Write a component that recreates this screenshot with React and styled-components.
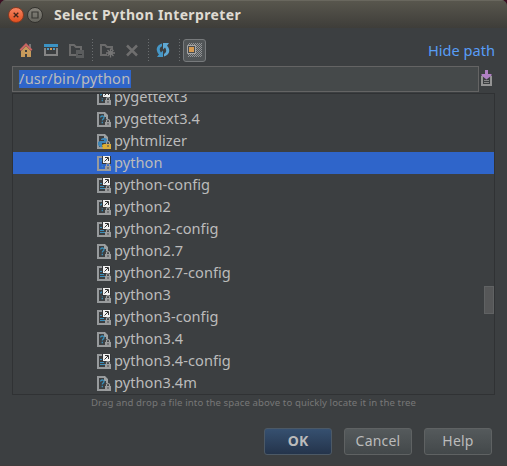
import React from 'react';
import styled, { createGlobalStyle } from 'styled-components';

const Global = createGlobalStyle`
  * { box-sizing: border-box; }
  body { margin: 0; background: #3c0f22; overflow: hidden; }
  svg { display: block; flex: none; }
`;
const Dialog = styled.div`
  width: 507px; height: 466px; background: #3c3f41; color: #bbb;
  font: 14.6px "Noto Sans", sans-serif; display: flex; flex-direction: column;
  border-radius: 6px 6px 0 0; overflow: hidden; border-bottom: 1px solid #403c3c;
`;
const TitleBar = styled.header`
  height: 28px; flex: none; display: flex; align-items: center; padding: 1px 0 0 8px;
  background: linear-gradient(#59574e, #3e3d39); box-shadow: inset 0 1px #69675e;
`;
const WindowButton = styled.button`
  width: 16px; height: 16px; padding: 0; margin-right: 3px; border-radius: 50%;
  border: 1px solid ${p => (p.$close ? '#8a3a20' : '#33322e')};
  background: ${p => (p.$close ? 'linear-gradient(#f58462, #e2501f)' : 'linear-gradient(#85837b, #65645d)')};
  display: grid; place-items: center;
`;
const Title = styled.h1`
  margin: -1px 0 0 8px; font: bold 14px "Noto Sans", sans-serif; color: #dfdbd2;
  letter-spacing: 0.36px; white-space: nowrap;
`;
const Toolbar = styled.div`
  height: 38px; flex: none; display: flex; align-items: center; padding: 7px 12px 0 14px;
`;
const Tool = styled.button`
  width: ${p => p.$w || 25}px; height: 23px; padding: 0; display: grid; place-items: center;
  border: 1px solid ${p => (p.$on ? '#777a7c' : 'transparent')}; border-radius: 3px;
  background: ${p => (p.$on ? '#515557' : 'none')};
`;
const Separator = styled.i`
  width: 1px; height: 23px; margin: 0 ${p => p.$r ?? 2}px 0 3px;
  background: repeating-linear-gradient(#6b6e70 0 1px, transparent 1px 3px);
`;
const PathLink = styled.a`
  margin: -2px 0 0 auto; color: #589df6; font-size: 14.6px; line-height: 22px;
`;
const PathRow = styled.div`
  height: 27px; flex: none; display: flex; padding-left: 12px; gap: 1px;
`;
const PathField = styled.div`
  width: 467px; height: 26px; border: 1px solid #646464; background: #45494a;
  display: flex; align-items: center; padding-left: 6px;
`;
const Selection = styled.span`
  height: 18px; line-height: 16px; width: 112px; background: #2f65ca; white-space: nowrap;
  letter-spacing: 0.2px;
`;
const HistoryButton = styled.button`
  padding: 4px 0 0 1px; background: none; border: 0; display: flex; align-items: flex-start;
`;
const Tree = styled.div`
  margin: 0 12px; height: 302px; flex: none; border: 1px solid #303234; display: flex; overflow: hidden;
  position: relative;
`;
const Rows = styled.div`
  flex: 1; margin-top: -8px;
`;
const Row = styled.div`
  height: 22px; display: flex; align-items: flex-start; gap: 3px; padding-left: 84px;
  background: ${p => (p.$selected ? '#2f65ca' : 'transparent')};
  svg { margin-top: 4px; }
`;
const RowText = styled.span`
  line-height: 20px; white-space: nowrap; letter-spacing: 0.04px;
`;
const Thumb = styled.div`
  position: absolute; right: 0; top: 192px; width: 10px; height: 28px;
  background: #565758; border: 1px solid #606263;
`;
const Hint = styled.p`
  margin: 0; height: 33px; flex: none; text-align: center; color: #777; font-size: 9.6px; line-height: 16px;
  white-space: nowrap; letter-spacing: 0.1px;
`;
const Actions = styled.footer`
  display: flex; justify-content: flex-end; gap: 12px; padding-right: 15px;
`;
const Action = styled.button`
  width: 68px; height: 27px; padding: 0 0 2px; border-radius: 3px; color: #bbb;
  border: 1px solid ${p => (p.$primary ? '#4c5966' : '#5f6263')};
  background: ${p => (p.$primary ? 'linear-gradient(#365070, #24344b)' : 'linear-gradient(#555a5c, #43484a)')};
  font: ${p => (p.$primary ? 'bold' : 'normal')} 14px "Noto Sans", sans-serif;
  letter-spacing: ${p => (p.$primary ? 0 : 0.2)}px;
`;

const HomeIcon = () => (
  <svg width="15" height="15" viewBox="0 0 15 15">
    <path d="M2 8l5-5 5 5v6H8v-3H6v3H2z" fill="#c69a5b" />
    <path d="M10 1h2v5h-2z" fill="#777" />
    <path d="M1.300 7.300L7 1.500l5.700 5.800" fill="none" stroke="#c96562" strokeWidth="2" />
    <path d="M6 7h2v2H6zM6 11h2v3H6z" fill="#3c3f41" />
  </svg>
);
const ProjectIcon = () => (
  <svg width="15" height="13" viewBox="0 0 15 13">
    <path d="M0 0h14v3H0z" fill="#3b93c4" />
    <path d="M1 4v7h12V4" fill="none" stroke="#858585" strokeWidth="2" />
    <path d="M3 4h2v2H3zM9 4h2v2H9z" fill="#4a9bc9" />
    <path d="M6 4h2v2H6z" fill="#d69a52" />
  </svg>
);
const FolderIcon = ({ star }) => (
  <svg width="15" height="15" viewBox="0 0 15 15">
    <path d="M1 12V2h4l2 2h5v3M0 12h7" fill="none" stroke="#6b6b6b" strokeWidth="2" />
    {star ? (
      <g stroke="#757575" strokeWidth="1.300">
        <path d="M10.500 5.500v9M6 10h9M7.500 7l6 6M13.500 7l-6 6" />
        <circle cx="10.500" cy="10" r="2.300" fill="#757575" stroke="none" />
      </g>
    ) : (
      <g><path d="M7 7h8v8H7z" fill="#5b5d5e" /><path d="M9 11.500h4" stroke="#333638" /></g>
    )}
  </svg>
);
const DeleteIcon = () => (
  <svg width="13" height="13" viewBox="0 0 13 13">
    <path d="M1 1.500l10 10M11 1.500l-10 10" stroke="#6e6e6e" strokeWidth="2.500" />
  </svg>
);
const RefreshIcon = () => (
  <svg width="15" height="15" viewBox="0 0 15 15">
    <path d="M6 .5C2 1.500 0 5 1 8c.4 1.500 1 2.500 2 3.300L1 14h6V7.500L5 9.500C3 7 3.500 4 6 3.200z" fill="#4597c7" />
    <path d="M8 13.500c4-1 6-4.500 5-7.500-.4-1.500-1-2.500-2-3.300L13 0H7v6.500l2-2c2 2.500 1.500 5.500-1 6.300z" fill="#5fa9d4" />
  </svg>
);
const HiddenIcon = () => (
  <svg width="15" height="15" viewBox="0 0 15 15">
    <defs>
      <pattern id="dither" width="2" height="2" patternUnits="userSpaceOnUse">
        <path d="M0 0h1v1H0zM1 1h1v1H1z" fill="#929496" />
      </pattern>
    </defs>
    <path d="M1 0h14v14H1z" fill="url(#dither)" />
    <path d="M.5 2.500h8v8h-8z" fill="#494c4e" stroke="#a6a6a6" />
    <path d="M2 4h5v5H2z" fill="#d69a50" />
  </svg>
);
const HistoryIcon = () => (
  <svg width="11" height="16" viewBox="0 0 11 16">
    <path d="M0 6h2v8h7V6h2v10H0z" fill="#949494" />
    <path d="M3 10.500h5M3 12.500h5" stroke="#858585" />
    <path d="M4 0h3v4h3.500v1.500L5.500 9.500.500 5.500V4H4z" fill="#b07fc4" />
  </svg>
);
const FileIcon = ({ kind, link }) => (
  <svg width="14" height="15" viewBox="0 0 14 15">
    <path d="M0 0h8v2H2v11h6v2H0z" fill="#979a9c" />
    <path d="M7 0h1l3 3v4H9V5H7z" fill="#9da0a1" />
    {kind === 'unknown' && (
      <path d="M3.600 5.500q0-1.500 1.700-1.500T7 5.500c0 1.500-1.700 1.500-1.700 3M5.300 9.800v1.400" fill="none" stroke="#3a91bd" strokeWidth="1.300" />
    )}
    {kind === 'text' && <path d="M3 5.500h3M3 8.500h4M3 10.500h5" stroke="#3d8eb9" />}
    {kind === 'python' && (
      <g>
        <path d="M4 5l2-1h2l2 1v3L8 9H5v4H3L1 11V8l2-1h4V6H4z" fill="#3e86b7" />
        <path d="M5 11l2-1h2v5H6z" fill="#e0b02b" />
      </g>
    )}
    {link && (
      <g>
        <path d="M5 0h9v8H5z" fill="#34373a" />
        <path d="M6 0h7v7H6z" fill="#f0f0f0" />
        <path d="M7.500 5.500l3.500-3.500M8 1.500h3.500V5" fill="none" stroke="#333" />
      </g>
    )}
    <path d="M9.500 10V8.500q0-1 1.500-1t1.500 1V10" fill="none" stroke="#a2a4a5" strokeWidth="1.200" />
    <path d="M8 10h6v5H8z" fill={kind === 'python' ? '#d9ad3b' : '#9b9d9e'} />
    <path d="M10.500 11h1v2h-1z" fill="#4c4e50" />
  </svg>
);

const files = [
  ['pygettext3', 'unknown', true],
  ['pygettext3.4', 'unknown', false],
  ['pyhtmlizer', 'python', false],
  ['python', 'unknown', true],
  ['python-config', 'text', true],
  ['python2', 'unknown', true],
  ['python2-config', 'text', true],
  ['python2.7', 'unknown', false],
  ['python2.7-config', 'text', true],
  ['python3', 'unknown', true],
  ['python3-config', 'text', true],
  ['python3.4', 'unknown', false],
  ['python3.4-config', 'text', true],
  ['python3.4m', 'unknown', false],
];

export default function App() {
  return (
    <>
      <Global />
      <Dialog>
        <TitleBar>
          <WindowButton $close aria-label="Close">
            <svg width="6" height="6" viewBox="0 0 6 6"><path d="M.7.7l4.600 4.600M5.300.7L.7 5.300" stroke="#3f251b" strokeWidth="1.300" /></svg>
          </WindowButton>
          <WindowButton aria-label="Maximize">
            <svg width="8" height="8" viewBox="0 0 8 8"><path d="M1 1h6v6H1z" fill="none" stroke="#383732" strokeWidth="1.200" /></svg>
          </WindowButton>
          <Title>Select Python Interpreter</Title>
        </TitleBar>
        <Toolbar>
          <Tool><HomeIcon /></Tool>
          <Tool><ProjectIcon /></Tool>
          <Tool><FolderIcon /></Tool>
          <Separator />
          <Tool><FolderIcon star /></Tool>
          <Tool><DeleteIcon /></Tool>
          <Separator />
          <Tool><RefreshIcon /></Tool>
          <Separator $r={3} />
          <Tool $on $w={23}><HiddenIcon /></Tool>
          <PathLink>Hide path</PathLink>
        </Toolbar>
        <PathRow>
          <PathField><Selection>/usr/bin/python</Selection></PathField>
          <HistoryButton aria-label="Path history"><HistoryIcon /></HistoryButton>
        </PathRow>
        <Tree>
          <Rows>
            {files.map(([name, kind, link]) => (
              <Row key={name} $selected={name === 'python'}>
                <FileIcon kind={kind} link={link} />
                <RowText>{name}</RowText>
              </Row>
            ))}
          </Rows>
          <Thumb />
        </Tree>
        <Hint>Drag and drop a file into the space above to quickly locate it in the tree</Hint>
        <Actions>
          <Action $primary>OK</Action>
          <Action>Cancel</Action>
          <Action>Help</Action>
        </Actions>
      </Dialog>
    </>
  );
}
